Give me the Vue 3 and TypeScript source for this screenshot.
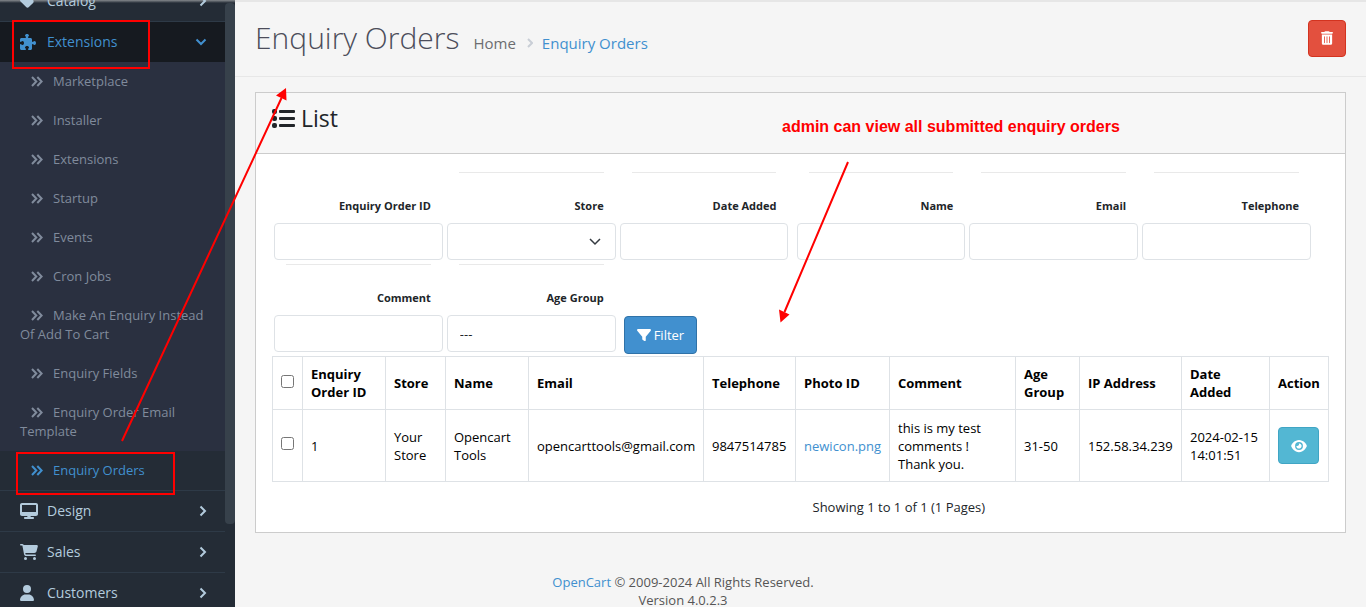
<script setup lang="ts">
import { ref } from 'vue'

interface MenuItem { label: string; viewBox: string; icon: string }

const catalog: MenuItem = {
  label: 'Catalog',
  viewBox: '0 0 448 512',
  icon: 'M0 80V229.500c0 17 6.700 33.300 18.700 45.300l176 176c25 25 65.500 25 90.500 0L418.700 317.300c25-25 25-65.500 0-90.500l-176-176c-12-12-28.300-18.700-45.300-18.700H48C21.500 32 0 53.500 0 80zm112 32a32 32 0 1 1 0 64 32 32 0 1 1 0-64z',
}
const lowerMenu: MenuItem[] = [
  {
    label: 'Design',
    viewBox: '0 0 576 512',
    icon: 'M64 0C28.700 0 0 28.700 0 64V352c0 35.300 28.700 64 64 64H240l-10.700 32H160c-17.700 0-32 14.300-32 32s14.300 32 32 32H416c17.700 0 32-14.300 32-32s-14.300-32-32-32H346.700L336 416H512c35.300 0 64-28.700 64-64V64c0-35.300-28.700-64-64-64H64zM512 64V288H64V64H512z',
  },
  {
    label: 'Sales',
    viewBox: '0 0 576 512',
    icon: 'M0 24C0 10.700 10.700 0 24 0H69.500c22 0 41.500 12.800 50.600 32h411c26.300 0 45.500 25 38.600 50.400l-41 152.300c-8.500 31.400-37 53.300-69.500 53.300H170.700l5.400 28.500c2.200 11.300 12.100 19.500 23.600 19.500H488c13.300 0 24 10.700 24 24s-10.700 24-24 24H199.700c-34.600 0-64.300-24.600-70.700-58.500L77.400 54.500c-.7-3.800-4-6.500-7.900-6.500H24C10.700 48 0 37.300 0 24zM128 464a48 48 0 1 1 96 0 48 48 0 1 1 -96 0zm336-48a48 48 0 1 1 0 96 48 48 0 1 1 0-96zM112 50H535L490 245H150z',
  },
  {
    label: 'Customers',
    viewBox: '0 0 448 512',
    icon: 'M224 256A128 128 0 1 0 224 0a128 128 0 1 0 0 256zm-45.700 48C79.800 304 0 383.800 0 482.300C0 498.700 13.300 512 29.700 512H418.300c16.400 0 29.700-13.300 29.700-29.700C448 383.800 368.200 304 269.700 304H178.300z',
  },
]
const subMenu: string[] = [
  'Marketplace', 'Installer', 'Extensions', 'Startup', 'Events', 'Cron Jobs',
  'Make An Enquiry Instead Of Add To Cart', 'Enquiry Fields',
  'Enquiry Order Email Template', 'Enquiry Orders',
]
const activeSub = 'Enquiry Orders'

interface Field { id: string; label: string; kind: 'text' | 'select'; line: boolean }
const fieldGroups: Field[][] = [
  [
    { id: 'order-id', label: 'Enquiry Order ID', kind: 'text', line: false },
    { id: 'store', label: 'Store', kind: 'select', line: true },
    { id: 'date-added', label: 'Date Added', kind: 'text', line: true },
  ],
  [
    { id: 'name', label: 'Name', kind: 'text', line: true },
    { id: 'email', label: 'Email', kind: 'text', line: true },
    { id: 'telephone', label: 'Telephone', kind: 'text', line: true },
  ],
]
const values = ref<Record<string, string>>({})
const comment = ref('')
const ageGroup = ref('')

const columns: { title: string; width: number }[] = [
  { title: 'Enquiry Order ID', width: 83 },
  { title: 'Store', width: 60 },
  { title: 'Name', width: 83 },
  { title: 'Email', width: 175 },
  { title: 'Telephone', width: 92 },
  { title: 'Photo ID', width: 94 },
  { title: 'Comment', width: 126 },
  { title: 'Age Group', width: 64 },
  { title: 'IP Address', width: 102 },
  { title: 'Date Added', width: 88 },
  { title: 'Action', width: 59 },
]
</script>

<template>
  <div class="page">
    <aside class="sidebar">
      <nav class="menu">
        <a href="#" class="item first">
          <span class="icon"><svg height="16" :viewBox="catalog.viewBox"><path :d="catalog.icon" /></svg></span>
          <span>{{ catalog.label }}</span>
          <svg class="chev" width="8" height="12" viewBox="0 0 8 12"><path d="M1.500 1.500L6 6L1.500 10.500" /></svg>
        </a>
        <a href="#" class="item open">
          <span class="icon"><svg height="16" viewBox="0 0 512 512"><path d="M192 104.800c0-9.200-5.800-17.300-13.200-22.800C167.200 73.300 160 61.300 160 48c0-26.500 28.700-48 64-48s64 21.500 64 48c0 13.300-7.200 25.300-18.800 34c-7.400 5.500-13.200 13.600-13.200 22.800c0 12.800 10.400 23.200 23.200 23.200H336c26.500 0 48 21.500 48 48v56.800c0 12.800 10.400 23.200 23.200 23.200c9.200 0 17.300-5.800 22.800-13.200c8.700-11.600 20.700-18.800 34-18.800c26.500 0 48 28.700 48 64s-21.500 64-48 64c-13.300 0-25.300-7.200-34-18.800c-5.500-7.400-13.600-13.200-22.800-13.200c-12.800 0-23.200 10.400-23.200 23.200V464c0 26.500-21.500 48-48 48H279.200c-12.800 0-23.200-10.400-23.200-23.200c0-9.200 5.800-17.300 13.200-22.800c11.600-8.700 18.800-20.700 18.800-34c0-26.500-28.700-48-64-48s-64 21.500-64 48c0 13.300 7.200 25.300 18.800 34c7.400 5.500 13.200 13.600 13.200 22.800c0 12.800-10.400 23.200-23.200 23.200H48c-26.500 0-48-21.500-48-48V343.200C0 330.400 10.400 320 23.200 320c9.200 0 17.300 5.800 22.800 13.200C54.700 344.800 66.700 352 80 352c26.500 0 48-28.700 48-64s-21.500-64-48-64c-13.300 0-25.300 7.200-34 18.800C40.500 250.200 32.400 256 23.200 256C10.400 256 0 245.600 0 232.800V176c0-26.500 21.500-48 48-48H168.800c12.800 0 23.200-10.400 23.200-23.200z" /></svg></span>
          <span>Extensions</span>
          <svg class="chev" width="12" height="8" viewBox="0 0 12 8"><path d="M1.500 1.500L6 6L10.500 1.500" /></svg>
        </a>
        <ul class="sub">
          <li v-for="s in subMenu" :key="s">
            <a href="#" :class="{ active: s === activeSub }">
              <svg class="dbl" width="12" height="11" viewBox="0 0 12 11"><path d="M1 1L5.300 5.500L1 10M6.300 1L10.600 5.500L6.300 10" /></svg>{{ s }}</a>
          </li>
        </ul>
        <a v-for="m in lowerMenu" :key="m.label" href="#" class="item">
          <span class="icon"><svg height="16" :viewBox="m.viewBox"><path :d="m.icon" /></svg></span>
          <span>{{ m.label }}</span>
          <svg class="chev" width="8" height="12" viewBox="0 0 8 12"><path d="M1.500 1.500L6 6L1.500 10.500" /></svg>
        </a>
      </nav>
      <div class="track"><div class="thumb"></div></div>
    </aside>

    <main class="content">
      <header class="page-head">
        <h1>Enquiry Orders</h1>
        <nav class="crumbs">
          <a href="#">Home</a>
          <svg width="6" height="10" viewBox="0 0 6 10"><path d="M1 1L5 5L1 9" /></svg>
          <a href="#" class="current">Enquiry Orders</a>
        </nav>
        <button type="button" class="btn danger" aria-label="Delete">
          <svg width="12" height="14" viewBox="0 0 448 512"><path d="M135.200 17.700C140.600 6.800 151.700 0 163.800 0H284.200c12.100 0 23.200 6.800 28.600 17.700L320 32h96c17.700 0 32 14.300 32 32s-14.300 32-32 32H32C14.300 96 0 81.700 0 64S14.300 32 32 32h96l7.200-14.300zM32 128H416V448c0 35.300-28.700 64-64 64H96c-35.300 0-64-28.700-64-64V128zm96 64c-8.800 0-16 7.200-16 16V432c0 8.800 7.200 16 16 16s16-7.200 16-16V208c0-8.800-7.200-16-16-16zm96 0c-8.800 0-16 7.200-16 16V432c0 8.800 7.200 16 16 16s16-7.200 16-16V208c0-8.800-7.200-16-16-16zm96 0c-8.800 0-16 7.200-16 16V432c0 8.800 7.200 16 16 16s16-7.200 16-16V208c0-8.800-7.200-16-16-16z" /></svg>
        </button>
      </header>

      <section class="card">
        <h2 class="card-head">
          <svg width="24" height="20" viewBox="0 0 24 20">
            <rect x="0" y="0" width="5" height="5" rx="2" /><rect x="0" y="7" width="5" height="5" rx="2" /><rect x="0" y="14" width="5" height="5" rx="2" />
            <rect x="7" y="1" width="16" height="3" rx="1" /><rect x="7" y="8" width="16" height="3" rx="1" /><rect x="7" y="15" width="16" height="3" rx="1" />
          </svg>
          List
        </h2>
        <div class="card-body">
          <form class="filters" @submit.prevent>
            <div v-for="(g, i) in fieldGroups" :key="i" class="group">
              <div v-for="f in g" :key="f.id" class="field" :class="{ lined: f.line }">
                <label :for="f.id">{{ f.label }}</label>
                <div v-if="f.kind === 'select'" class="select-wrap">
                  <select :id="f.id" v-model="values[f.id]"></select>
                  <svg width="12" height="8" viewBox="0 0 12 8"><path d="M1 1L6 6L11 1" /></svg>
                </div>
                <input v-else :id="f.id" v-model="values[f.id]" type="text" />
              </div>
            </div>
            <div class="group">
              <div class="field lined">
                <label for="comment">Comment</label>
                <input id="comment" v-model="comment" type="text" />
              </div>
              <div class="field lined">
                <label for="age-group">Age Group</label>
                <select id="age-group" v-model="ageGroup"><option value="">---</option></select>
              </div>
              <div class="submit">
                <button type="submit" class="btn primary">
                  <svg width="14" height="14" viewBox="0 0 512 512"><path d="M3.900 54.900C10.500 40.900 24.500 32 40 32H472c15.500 0 29.500 8.900 36.100 22.900s4.600 30.500-5.200 42.500L320 320.900V448c0 12.100-6.800 23.200-17.700 28.600s-23.800 4.300-33.500-3l-64-48c-8.100-6-12.800-15.500-12.800-25.600V320.900L9 97.300C-.7 85.400-2.800 68.800 3.900 54.900z" /></svg>
                  Filter
                </button>
              </div>
            </div>
          </form>

          <table>
            <colgroup>
              <col :style="{ width: '30px' }" />
              <col v-for="c in columns" :key="c.title" :style="{ width: c.width + 'px' }" />
            </colgroup>
            <thead>
              <tr>
                <th class="tick"><input type="checkbox" aria-label="Select all" /></th>
                <th v-for="c in columns" :key="c.title">{{ c.title }}</th>
              </tr>
            </thead>
            <tbody>
              <tr>
                <td class="tick"><input type="checkbox" aria-label="Select order 1" /></td>
                <td>1</td>
                <td>Your Store</td>
                <td>Opencart Tools</td>
                <td>opencarttools@gmail.com</td>
                <td>9847514785</td>
                <td><a href="#">newicon.png</a></td>
                <td>this is my test comments !<br />Thank you.</td>
                <td class="nowrap">31-50</td>
                <td>152.58.34.239</td>
                <td><span class="nowrap">2024-02-15</span> 14:01:51</td>
                <td>
                  <button type="button" class="btn info" aria-label="View">
                    <svg width="16" height="14" viewBox="0 0 576 512"><path d="M288 32c-80.800 0-145.500 36.800-192.600 80.600C48.600 156 17.300 208 2.500 243.700c-3.300 7.900-3.300 16.700 0 24.600C17.300 304 48.600 356 95.400 399.400C142.500 443.200 207.200 480 288 480s145.500-36.800 192.600-80.600c46.800-43.500 78.100-95.400 93-131.100c3.300-7.900 3.300-16.700 0-24.600c-14.900-35.700-46.200-87.700-93-131.100C433.500 68.800 368.800 32 288 32zM144 256a144 144 0 1 1 288 0 144 144 0 1 1 -288 0zm144-64c0 35.300-28.700 64-64 64c-7.100 0-13.900-1.200-20.300-3.300c-5.500-1.800-11.900 1.600-11.700 7.400c.3 6.900 1.300 13.800 3.200 20.700c13.700 51.200 66.400 81.600 117.600 67.900s81.600-66.400 67.900-117.600c-11.100-41.500-47.800-69.400-88.600-71.100c-5.800-.2-9.200 6.100-7.400 11.700c2.100 6.400 3.300 13.200 3.300 20.300z" /></svg>
                  </button>
                </td>
              </tr>
            </tbody>
          </table>

          <div class="results"><div></div><div>Showing 1 to 1 of 1 (1 Pages)</div></div>
        </div>
      </section>

      <footer>
        <a href="#">OpenCart</a> © 2009-2024 All Rights Reserved.<br />Version 4.0.2.3
      </footer>
    </main>

    <svg class="marks" width="1366" height="607" viewBox="0 0 1366 607">
      <rect x="13" y="21" width="136" height="47" />
      <rect x="17" y="453" width="157" height="41" />
      <path class="stroke" d="M122 441L281.500 98M848 162L784.500 312" />
      <path class="head" d="M286 88L276 95.500L286.500 100.500zM780.500 322.500L779 309.500L789.500 314.500z" />
    </svg>
    <p class="note">admin can view all submitted enquiry orders</p>
  </div>
</template>

<style>
body {
  margin: 0;
  background: #f5f5f5;
}
</style>

<style scoped>
* {
  box-sizing: border-box;
}
.page {
  position: relative;
  display: flex;
  height: 100vh;
  overflow: hidden;
  background: #f5f5f5;
  color: #212529;
  font: 13px/18px 'Open Sans', 'Noto Sans', sans-serif;
  box-shadow: inset 0 2px 0 #e6e6e6;
}
a {
  color: #4190cf;
  text-decoration: none;
}
svg {
  flex: none;
}

/* Sidebar */
.sidebar {
  display: flex;
  flex: none;
  width: 235px;
  overflow: hidden;
  background: linear-gradient(#85898d, #242c36 3px);
}
.menu {
  flex: 1;
  margin-top: -19px;
}
.item {
  display: flex;
  align-items: center;
  height: 41px;
  padding: 0 18px 0 20px;
  border-top: 1px solid #2e3a47;
  color: #b3cbdd;
  font-size: 14px;
  line-height: 20px;
}
.item.first {
  height: 40px;
  border-top: 0;
}
.item.open {
  background: #161a20;
  color: #4190cf;
}
.icon {
  display: flex;
  width: 27px;
}
.icon svg {
  fill: currentColor;
}
.chev {
  margin: 0 0 0 auto;
  fill: none;
  stroke: currentColor;
  stroke-width: 2;
}
.sub {
  margin: 0;
  padding: 0;
  background: #2a3040;
  list-style: none;
}
.sub a {
  display: block;
  padding: 10px 20px;
  color: #808b9c;
  line-height: 19px;
}
.sub a.active {
  background: #242c36;
  color: #4190cf;
}
.dbl {
  margin: 0 10px 0 11px;
  vertical-align: -1px;
  fill: none;
  stroke: currentColor;
  stroke-width: 2;
}
.track {
  width: 10px;
  padding-top: 3px;
}
.thumb {
  height: 521px;
  border-radius: 4px;
  background: #37414b;
}

/* Heading */
.content {
  flex: 1;
  min-width: 0;
}
.page-head {
  display: flex;
  align-items: center;
  height: 77px;
  padding: 0 20px;
  border-bottom: 1px solid #e7e7e7;
}
h1 {
  margin: 0 14px 0 0;
  color: #4c4d5a;
  font-size: 30px;
  font-weight: 300;
  line-height: 40px;
}
.crumbs {
  display: flex;
  align-items: center;
  gap: 9px;
  padding-top: 10px;
  font-size: 15px;
  line-height: 20px;
}
.crumbs a {
  color: #6c6d70;
}
.crumbs a.current {
  color: #4190cf;
}
.crumbs svg {
  margin-left: 2px;
  fill: none;
  stroke: #c9ced6;
  stroke-width: 2;
}
.btn {
  display: flex;
  align-items: center;
  justify-content: center;
  border: 1px solid;
  border-radius: 4px;
  color: #fff;
  font: 13px/18px 'Open Sans', 'Noto Sans', sans-serif;
}
.btn svg {
  fill: #fff;
}
.danger {
  width: 38px;
  height: 37px;
  margin-left: auto;
  padding: 0;
  border-color: #d3331f;
  background: #e3503e;
}

/* Card */
.card {
  margin: 15px 20px 0;
  border: 1px solid #ccc;
  background: #fff;
}
.card-head {
  display: flex;
  gap: 5px;
  height: 61px;
  margin: 0;
  padding: 10px 16px;
  border-bottom: 1px solid #ccc;
  background: #f7f7f7;
  font-size: 23px;
  font-weight: 400;
  line-height: 30px;
}
.card-head svg {
  margin-top: 6px;
  fill: currentColor;
}
.card-body {
  padding: 18px 16px 16px;
}
.filters {
  display: grid;
  grid-template-columns: 1fr 1fr;
  gap: 4px;
  padding-right: 16px;
}
.group {
  display: grid;
  grid-template-columns: repeat(3, 1fr);
}
.field {
  display: flex;
  flex-direction: column;
  height: 88px;
  padding: 0 2px;
}
.field::before {
  height: 1px;
  margin: 0 12px 24px;
  content: '';
}
.lined::before {
  background: #e9e9e9;
}
.field label {
  padding: 0 12px;
  margin-bottom: 8px;
  font-size: 11px;
  font-weight: 700;
  line-height: 18px;
  text-align: right;
}
.field input,
.field select {
  display: block;
  width: 100%;
  height: 37px;
  padding: 0 12px;
  border: 1px solid #dee2e6;
  border-radius: 4px;
  appearance: none;
  background: #fff;
  color: #212529;
  font: 13px/18px 'Open Sans', 'Noto Sans', sans-serif;
}
.select-wrap {
  display: grid;
  align-items: center;
}
.select-wrap > * {
  grid-area: 1 / 1;
}
.select-wrap svg {
  justify-self: end;
  margin-right: 15px;
  pointer-events: none;
  fill: none;
  stroke: #343a40;
  stroke-width: 1.500;
}
.submit {
  padding: 52px 6px 0;
}
.primary {
  gap: 3px;
  height: 38px;
  padding: 0 12px;
  border-color: #2f72a8;
  background: #4190cf;
}

/* Orders table */
table {
  width: 100%;
  margin-top: 2px;
  border-collapse: collapse;
  table-layout: fixed;
  color: #000;
}
th,
td {
  padding: 8px;
  border: 1px solid #dee2e6;
  text-align: left;
  vertical-align: middle;
}
th {
  font-weight: 700;
}
tbody tr {
  height: 72px;
}
.nowrap {
  white-space: nowrap;
}
.tick input {
  display: block;
  width: 13px;
  height: 13px;
  margin: 0 0 4px;
}
.info {
  width: 41px;
  height: 37px;
  padding: 0;
  border-color: #40a5c4;
  background: #53b7d3;
}
.results {
  display: grid;
  grid-template-columns: 1fr 1fr;
  padding-top: 16px;
}
.results > div {
  padding-left: 12px;
}
footer {
  padding: 40px 235px 0 0;
  color: #555;
  text-align: center;
}

/* Annotations drawn over the page */
.marks {
  position: absolute;
  top: 0;
  left: 0;
  pointer-events: none;
}
.marks rect,
.marks .stroke {
  fill: none;
  stroke: #f00;
  stroke-width: 2;
}
.marks .head {
  fill: #f00;
}
.note {
  position: absolute;
  top: 117px;
  left: 782px;
  margin: 0;
  color: #f00;
  font: bold 16px/20px 'Liberation Sans', Arial, sans-serif;
}
</style>
